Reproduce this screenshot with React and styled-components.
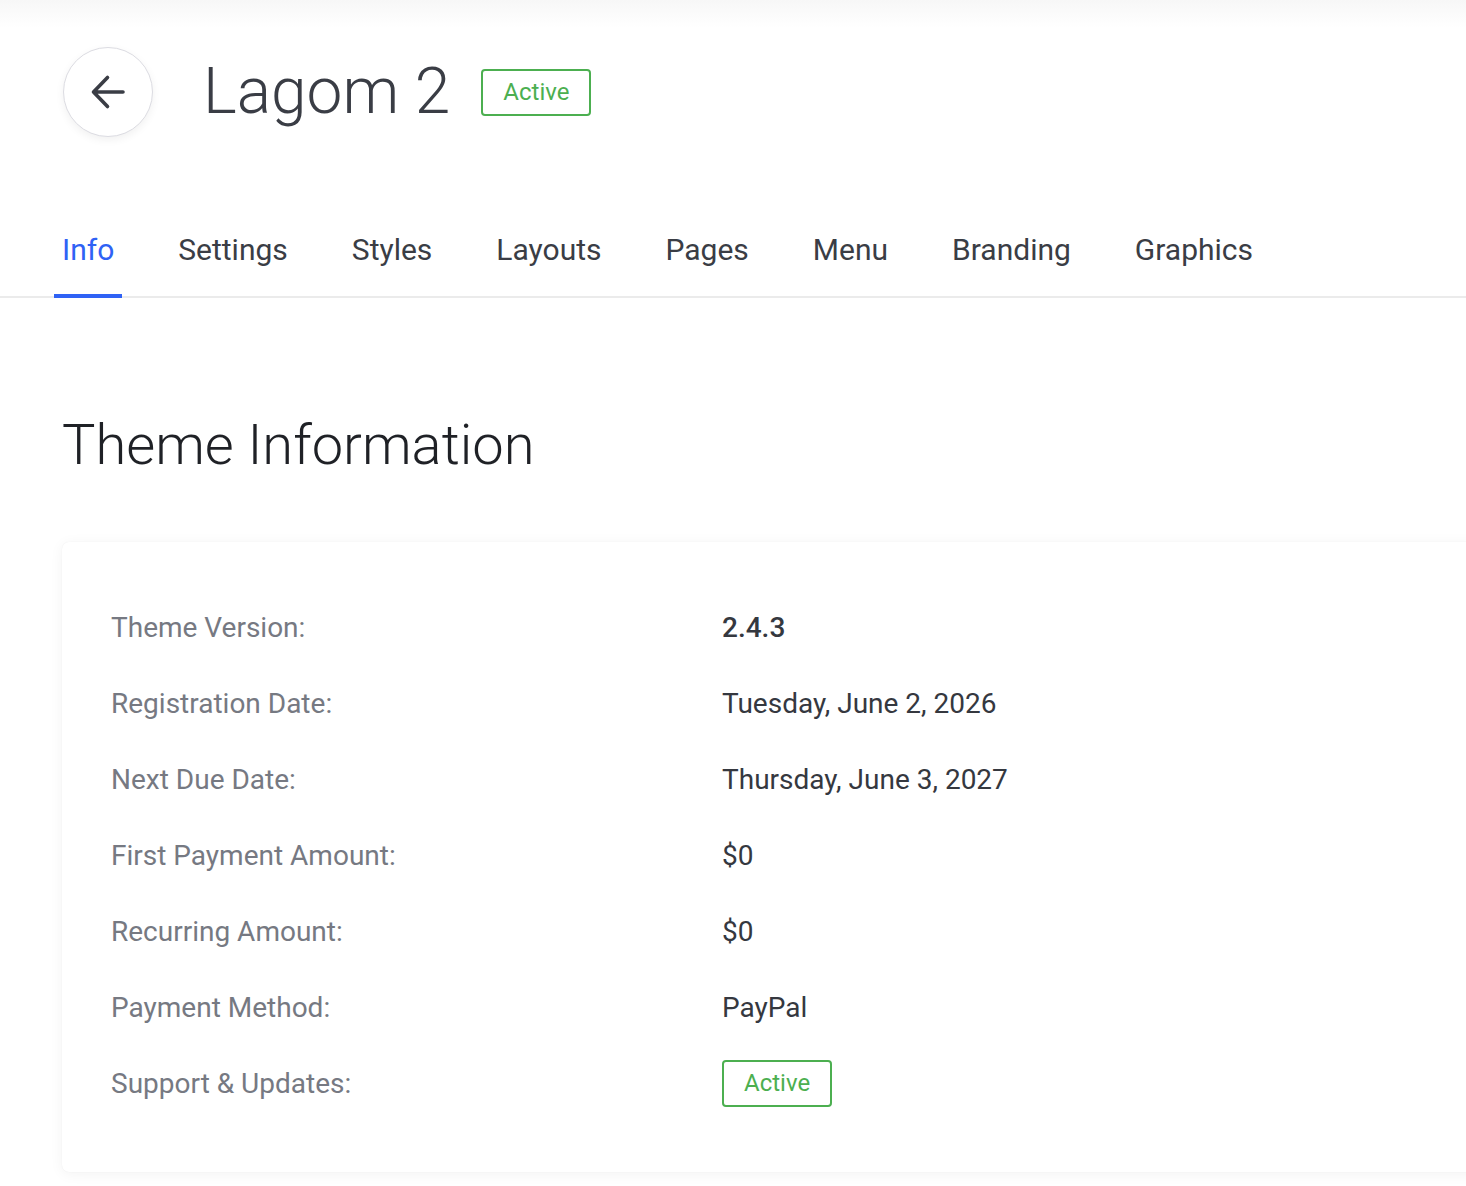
import React from "react";
import styled, { createGlobalStyle } from "styled-components";

const Global = createGlobalStyle`
  html, body { margin: 0; padding: 0; background: #ffffff; }
  body {
    font-family: Roboto, "Liberation Sans", Arial, sans-serif;
    overflow-x: hidden;
    -webkit-font-smoothing: antialiased;
  }
  * { box-sizing: border-box; }
`;

const Page = styled.div`
  min-height: 1186px;
  background: linear-gradient(#f7f7f7 0px, #ffffff 28px);
  overflow: hidden;
`;

const Header = styled.header`
  display: flex;
  align-items: center;
  padding: 47px 0 0 63px;
`;

const BackButton = styled.button`
  width: 90px;
  height: 90px;
  border-radius: 50%;
  border: 1px solid #dcdce2;
  background: #fff;
  box-shadow: 0 3px 8px rgba(0, 0, 0, 0.06);
  display: flex;
  align-items: center;
  justify-content: center;
  padding: 0;
  cursor: pointer;
`;

const Title = styled.h1`
  margin: 0 0 0 50px;
  font-size: 64px;
  font-weight: 300;
  line-height: 1;
  color: #3a3d45;
  letter-spacing: 0;
`;

const Badge = styled.span`
  display: inline-flex;
  align-items: center;
  justify-content: center;
  height: 47px;
  padding: 0 20px;
  border: 2px solid #4caf50;
  border-radius: 4px;
  color: #4caf50;
  font-size: 24px;
  font-weight: 400;
  margin-left: ${(p) => p.$ml || "0px"};
`;

const Nav = styled.nav`
  margin-top: 75px;
  display: flex;
  gap: 48px;
  padding-left: 54px;
  box-shadow: inset 0 -2px 0 #ebebeb;
`;

const Tab = styled.a`
  display: block;
  padding: 20px 8px 26px;
  font-size: 30px;
  line-height: 36px;
  color: ${(p) => (p.$active ? "#2f62f5" : "#3a3d45")};
  border-bottom: 4px solid ${(p) => (p.$active ? "#2f62f5" : "transparent")};
  cursor: pointer;
  white-space: nowrap;
`;

const Content = styled.main`
  padding: 0 0 0 62px;
`;

const SectionTitle = styled.h2`
  margin: 112px 0 0;
  font-size: 56px;
  font-weight: 300;
  line-height: 70px;
  color: #1f2126;
`;

const Card = styled.section`
  margin-top: 62px;
  margin-right: -20px;
  background: #fff;
  border-radius: 7px;
  box-shadow: 0 2px 14px rgba(0, 0, 0, 0.05), 0 0 1px rgba(0, 0, 0, 0.08);
  padding: 47px 49px 51px;
  display: grid;
  grid-template-columns: 611px 1fr;
  grid-auto-rows: 76px;
  align-items: center;
`;

const Label = styled.div`
  font-size: 28px;
  color: #767982;
`;

const Value = styled.div`
  font-size: 28px;
  color: #35383f;
  font-weight: ${(p) => (p.$strong ? 500 : 400)};
`;

const ArrowIcon = () => (
  <svg width="36" height="36" viewBox="0 0 36 36" fill="none">
    <path
      d="M33 18H3.5M17.5 3.5L3.5 18l14 14.5"
      stroke="#3a3d45"
      strokeWidth="3.6"
      strokeLinecap="round"
      strokeLinejoin="round"
    />
  </svg>
);

const tabs = ["Info", "Settings", "Styles", "Layouts", "Pages", "Menu", "Branding", "Graphics"];

const rows = [
  ["Theme Version:", "2.4.3", true],
  ["Registration Date:", "Tuesday, June 2, 2026"],
  ["Next Due Date:", "Thursday, June 3, 2027"],
  ["First Payment Amount:", "$0"],
  ["Recurring Amount:", "$0"],
  ["Payment Method:", "PayPal"],
];

export default function App() {
  return (
    <Page>
      <Global />
      <Header>
        <BackButton aria-label="Back">
          <ArrowIcon />
        </BackButton>
        <Title>Lagom 2</Title>
        <Badge $ml="31px">Active</Badge>
      </Header>
      <Nav>
        {tabs.map((t, i) => (
          <Tab key={t} $active={i === 0}>
            {t}
          </Tab>
        ))}
      </Nav>
      <Content>
        <SectionTitle>Theme Information</SectionTitle>
        <Card>
          {rows.map(([l, v, s]) => (
            <React.Fragment key={l}>
              <Label>{l}</Label>
              <Value $strong={s}>{v}</Value>
            </React.Fragment>
          ))}
          <Label>Support &amp; Updates:</Label>
          <Value>
            <Badge>Active</Badge>
          </Value>
        </Card>
      </Content>
    </Page>
  );
}
